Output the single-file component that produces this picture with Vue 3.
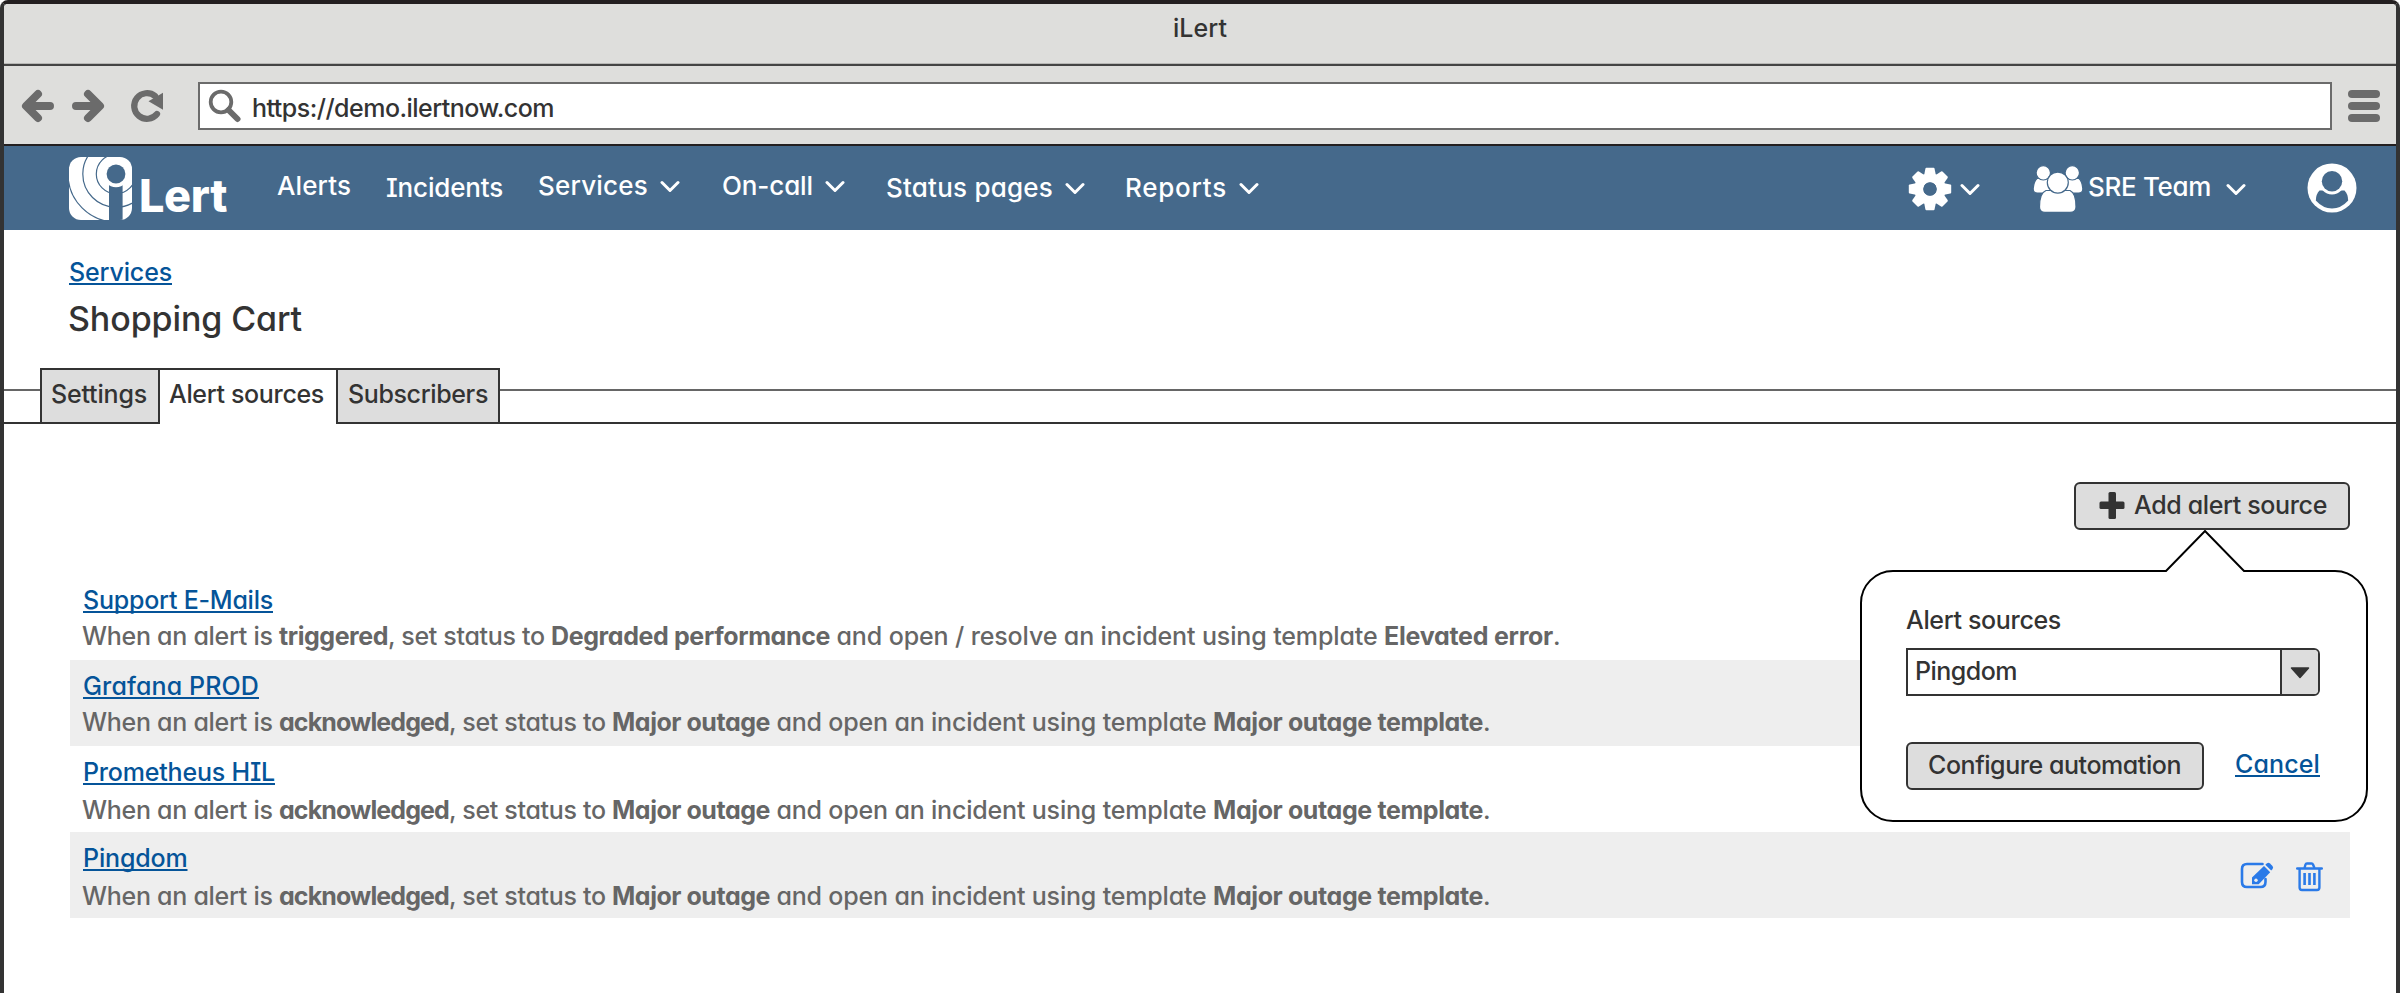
<script setup>
// Spreads a text run over a fixed width by adjusting its letter spacing.
const vFit = {
  mounted(el, { value }) {
    const width = el.getBoundingClientRect().width
    el.style.letterSpacing = `${(value - width) / el.textContent.length}px`
  },
}

const menu = [
  { label: 'Alerts', width: 74 },
  { label: 'Incidents', width: 117, low: true },
  { label: 'Services', width: 110, more: true },
  { label: 'On-call', width: 91, more: true },
  { label: 'Status pages', width: 167, more: true, low: true },
  { label: 'Reports', width: 102, more: true, low: true },
]

const tabs = [
  { label: 'Settings', width: 96, cls: 'settings' },
  { label: 'Alert sources', width: 155, cls: 'active' },
  { label: 'Subscribers', width: 140, cls: 'subscribers' },
]

const outage = [
  { t: 'When an alert is ', w: 197 },
  { t: 'acknowledged', w: 170, b: true },
  { t: ', set status to ', w: 163 },
  { t: 'Major outage', w: 158, b: true },
  { t: ' and open an incident using template ', w: 443 },
  { t: 'Major outage template', w: 270, b: true },
  { t: '.', w: 6 },
]

const rows = [
  {
    name: 'Support E-Mails',
    width: 190,
    cls: 'r1',
    runs: [
      { t: 'When an alert is ', w: 197 },
      { t: 'triggered', w: 109, b: true },
      { t: ', set status to ', w: 163 },
      { t: 'Degraded performance', w: 279, b: true },
      { t: ' and open / resolve an incident using template ', w: 554 },
      { t: 'Elevated error', w: 169, b: true },
      { t: '.', w: 6 },
    ],
  },
  { name: 'Grafana PROD', width: 176, cls: 'r2', runs: outage },
  { name: 'Prometheus HIL', width: 192, cls: 'r3', runs: outage },
  { name: 'Pingdom', width: 104.5, cls: 'r4', runs: outage, actions: true },
]

const teeth = [0, 45, 90, 135, 180, 225, 270, 315]
</script>

<template>
  <div class="window">
    <header class="titlebar"><span v-fit="54">iLert</span></header>
    <div class="toolbar">
      <svg class="nav-icons" width="150" height="40" viewBox="17 86 150 40">
        <g fill="none" stroke="#6b6b6b" stroke-width="8" stroke-linecap="round" stroke-linejoin="round">
          <path d="M50 106H27M38 94L26 106L38 118" />
          <path d="M76 106H99M88 94L100 106L88 118" />
          <path d="M157 114A12.800 12.800 0 1 1 155 96" stroke-width="6.200" />
        </g>
        <path d="M163 92.700V109.800L148.500 101.300Z" fill="#6b6b6b" />
      </svg>
      <div class="address">
        <svg width="34" height="34" viewBox="208 89 34 34" fill="none" stroke="#6b6b6b">
          <circle cx="221" cy="102" r="10.300" stroke-width="3.800" />
          <path d="M228.500 110L237.500 119" stroke-width="6" stroke-linecap="round" />
        </svg>
        <span v-fit="302">https://demo.ilertnow.com</span>
      </div>
      <div class="burger"><i></i><i></i><i></i></div>
    </div>

    <nav class="navbar">
      <div class="logo">
        <svg width="63" height="63" viewBox="0 0 63 63">
          <defs><clipPath id="tile"><rect width="63" height="63" rx="12" /></clipPath></defs>
          <g clip-path="url(#tile)">
            <rect width="63" height="63" fill="#fff" />
            <g fill="none" stroke="#45698b" stroke-width="1.200">
              <circle cx="47" cy="17" r="19.700" />
              <circle cx="47" cy="17" r="33.200" />
              <circle cx="47" cy="17" r="48" />
            </g>
            <rect x="40" y="27" width="13.600" height="36" fill="#45698b" />
            <circle cx="47" cy="17" r="13.200" fill="#fff" />
            <circle cx="47" cy="17" r="9.400" fill="#45698b" />
          </g>
        </svg>
        <b v-fit="88">Lert</b>
      </div>
      <div class="menu">
        <a v-for="m in menu" :key="m.label" :class="{ low: m.low }">
          <span v-fit="m.width">{{ m.label }}</span>
          <svg v-if="m.more" class="chev" width="20" height="13" viewBox="0 0 20 13"><path d="M2 2.500L10 10.500L18 2.500" /></svg>
        </a>
      </div>
      <div class="gear">
        <svg width="44" height="44" viewBox="-22 -22 44 44">
          <circle r="11.200" fill="none" stroke="#fff" stroke-width="9" />
          <path v-for="a in teeth" :key="a" d="M-6 -13L-4.600 -20.300Q-4.400 -21.200 -3.600 -21.200H3.600Q4.400 -21.200 4.600 -20.300L6 -13Z" fill="#fff" :transform="`rotate(${a})`" />
          <circle r="6.600" fill="#45698b" />
        </svg>
        <svg class="chev" width="20" height="13" viewBox="0 0 20 13"><path d="M2 2.500L10 10.500L18 2.500" /></svg>
      </div>
      <div class="team">
        <svg width="50" height="48" viewBox="2033 165 50 48" fill="#fff" stroke="#45698b" stroke-width="1.200">
          <path d="M2037 178.500H2052V193H2037.500Q2033 193 2033.200 188.500Q2034 181 2037 178.500Z" />
          <path d="M2079 178.500H2063V193H2078.500Q2083 193 2082.800 188.500Q2082 181 2079 178.500Z" />
          <circle cx="2043.300" cy="172.800" r="7.200" />
          <circle cx="2072.300" cy="172.800" r="7.200" />
          <path d="M2046 190.500H2070Q2076 193 2076 207Q2076 212.300 2070 212.300H2045Q2039.500 212.300 2039.500 207Q2039.500 193 2046 190.500Z" />
          <circle cx="2057.800" cy="182.600" r="10.500" />
        </svg>
        <span v-fit="123">SRE Team</span>
        <svg class="chev" width="20" height="13" viewBox="0 0 20 13"><path d="M2 2.500L10 10.500L18 2.500" /></svg>
      </div>
      <svg class="avatar" width="50" height="50" viewBox="-25 -25 50 50">
        <circle r="24.500" fill="#fff" />
        <path d="M-12.500 2.500H12.500Q16 6 16.200 12.500Q9 20.500 0 20.500Q-9 20.500 -16.200 12.500Q-16 6 -12.500 2.500Z" fill="#45698b" />
        <ellipse cy="-6.800" rx="13" ry="13.300" fill="#fff" />
        <circle cy="-6.800" r="10.200" fill="#45698b" />
      </svg>
    </nav>

    <main class="page">
      <a class="link crumb" v-fit="103">Services</a>
      <h1><span v-fit="234">Shopping Cart</span></h1>
      <div class="tabs">
        <div v-for="t in tabs" :key="t.label" class="tab" :class="t.cls"><span v-fit="t.width">{{ t.label }}</span></div>
      </div>

      <section class="content">
        <button class="btn add">
          <svg width="26" height="28" viewBox="0 0 26 28" fill="#333">
            <rect x="9.500" y="1" width="7.500" height="27" rx="1.500" />
            <rect x="0.500" y="10.500" width="25" height="7.500" rx="1.500" />
          </svg>
          <span v-fit="193">Add alert source</span>
        </button>

        <ul class="list">
          <li v-for="r in rows" :key="r.name" :class="r.cls">
            <div>
              <a class="link" v-fit="r.width">{{ r.name }}</a>
              <p><span v-for="(s, i) in r.runs" :key="i" :class="{ bold: s.b }" v-fit="s.w">{{ s.t }}</span></p>
            </div>
            <div v-if="r.actions" class="actions">
              <svg width="34" height="28" viewBox="0 0 34 28">
                <path d="M22.500 2H7Q2 2 2 7V20Q2 25 7 25H20.500Q25.500 25 25.500 20V17" fill="none" stroke="#2a7ae8" stroke-width="2.600" stroke-linecap="round" />
                <path d="M12 22.300V15.500L24 4L30.200 10.200L18.700 22.300Z" fill="#2a7ae8" />
                <path d="M25.300 2.800L27 1.200Q28.600 0 30 1.400L32.500 4Q33.700 5.400 32.600 6.900L31.200 8.600Z" fill="#2a7ae8" />
                <circle cx="16" cy="18.200" r="1.700" fill="#eee" />
              </svg>
              <svg width="27" height="30" viewBox="0 0 27 30" fill="none" stroke="#2a7ae8" stroke-width="2.400">
                <path d="M1.200 6.500H25.800" stroke-linecap="round" />
                <path d="M8.500 6L9.500 2.500Q9.800 1.500 11 1.500H15.500Q16.700 1.500 17 2.500L18.500 6" />
                <path d="M3.600 6.500V25.500Q3.600 28 6 28H21Q23.400 28 23.400 25.500V6.500" />
                <path d="M8.600 11V23M13.500 11V23M18.400 11V23" stroke-width="2.600" />
              </svg>
            </div>
          </li>
        </ul>

        <div class="callout">
          <svg class="bubble" width="508" height="292" viewBox="0 0 508 292">
            <path d="M33 41H306L345 1L384 41H475A32 32 0 0 1 507 73V259A32 32 0 0 1 475 291H33A32 32 0 0 1 1 259V73A32 32 0 0 1 33 41Z" fill="#fff" stroke="#000" stroke-width="2" />
          </svg>
          <div class="form">
            <label><span v-fit="155">Alert sources</span></label>
            <div class="combo">
              <div class="value"><span v-fit="102">Pingdom</span></div>
              <div class="drop"><svg width="20" height="12" viewBox="0 0 20 12"><path d="M1.500 1H18.500L10 10.500Z" fill="#333" stroke="#333" stroke-width="1.500" stroke-linejoin="round" /></svg></div>
            </div>
            <div class="buttons">
              <button class="btn configure"><span v-fit="253">Configure automation</span></button>
              <a class="link" v-fit="85">Cancel</a>
            </div>
          </div>
        </div>
      </section>
    </main>
  </div>
</template>

<style>
body {
  background: #fff;
}
</style>

<style scoped>
* {
  box-sizing: border-box;
}
.window {
  width: 2400px;
  height: 993px;
  overflow: hidden;
  border: 4px solid #333;
  border-top-color: #231f20;
  border-bottom: 0;
  border-radius: 8px 8px 0 0;
  background: #fff;
  color: #333;
  font: 500 25px/30px Inter, 'Liberation Sans', sans-serif;
  font-feature-settings: 'cv11', 'cv08', 'cv10';
  display: flex;
  flex-direction: column;
}
span, a, b {
  display: inline-block;
  white-space: pre;
}
svg {
  display: block;
  flex: none;
}
.titlebar {
  height: 62px;
  padding: 9px 0 0;
  text-align: center;
  background: #dededc;
  border-bottom: 2px solid #444;
  box-shadow: inset 0 -1px #b8b8b6;
}
.toolbar {
  height: 80px;
  padding: 16px 16px 0 13px;
  background: #dededc;
  border-bottom: 2px solid #231f20;
  display: flex;
}
.nav-icons {
  margin-top: 4px;
}
.address {
  margin-left: 31px;
  width: 2134px;
  height: 48px;
  border: 2px solid #6b6b6b;
  background: #fff;
  display: flex;
  padding: 5px 0 0 8px;
}
.address span {
  margin: 4px 0 0 10px;
}
.burger {
  margin: 8px 0 0 16px;
  width: 32px;
  display: flex;
  flex-direction: column;
  gap: 4px;
}
.burger i {
  height: 8px;
  border-radius: 4px;
  background: #6b6b6b;
}
.navbar {
  height: 84px;
  background: #45698b;
  color: #fff;
  display: flex;
  font-size: 26px;
}
.logo {
  display: flex;
  width: 273px;
  padding: 11px 0 0 65px;
}
.logo b {
  font-size: 45px;
  line-height: 50px;
  margin: 14px 0 0 7px;
  font-weight: 800;
}
.menu {
  display: grid;
  grid-template-columns: 109px 152px 184px 164px 239px 160px;
  padding-top: 25px;
  width: 1631px;
}
.menu a {
  display: flex;
}
.menu .low {
  padding-top: 2px;
}
.chev {
  fill: none;
  stroke: #fff;
  stroke-width: 3;
  stroke-linecap: round;
  stroke-linejoin: round;
}
.menu .chev {
  margin: 9px 0 0 12px;
}
.gear {
  display: flex;
  width: 125px;
  padding-top: 21px;
}
.gear .chev {
  margin: 16px 0 0 8px;
}
.team {
  display: flex;
  width: 274px;
  padding-top: 19px;
}
.team span {
  margin: 7px 0 0 5px;
}
.team .chev {
  margin: 18px 0 0 15px;
}
.avatar {
  margin-top: 17px;
}
.page {
  padding-top: 27px;
}
.link {
  color: #055499;
  text-decoration: underline;
  text-decoration-thickness: 2px;
  text-underline-offset: 2px;
  text-decoration-skip-ink: none;
}
.crumb {
  display: block;
  width: max-content;
  margin-left: 65px;
}
h1 {
  margin: 12px 0 0 64px;
  font: inherit;
  font-size: 34px;
  line-height: 40px;
  height: 69px;
}
.tabs {
  display: flex;
  height: 56px;
  padding-left: 36px;
  background: linear-gradient(#666, #666) 0 21px / 100% 2px no-repeat,
    linear-gradient(#333, #333) 0 100% / 100% 2px no-repeat;
}
.tab {
  border: 2px solid #333;
  background: #ddd;
  padding: 9px 0 0 9px;
}
.settings {
  width: 120px;
}
.active {
  width: 176px;
  background: #fff;
  border-width: 2px 0 0;
}
.subscribers {
  width: 164px;
  padding-left: 10px;
}
.content {
  position: relative;
  padding: 58px 46px 0 66px;
  display: flex;
  flex-direction: column;
}
.btn {
  height: 48px;
  border: 2px solid #333;
  border-radius: 6px;
  background: #ddd;
  color: inherit;
  font: inherit;
  font-feature-settings: inherit;
  padding: 6px 0 0;
  display: flex;
}
.add {
  width: 276px;
  align-self: flex-end;
  padding-left: 23px;
}
.add svg {
  margin: 1px 9px 0 0;
}
.list {
  list-style: none;
  margin: 44px 0 0;
  padding: 0;
}
.list li {
  height: 86px;
  padding: 11px 0 0 13px;
  display: flex;
}
.list p {
  margin: 6px 0 0 -1px;
  color: #666;
  white-space: pre;
}
.list .link {
  display: block;
  width: max-content;
}
.bold {
  font-weight: 700;
}
.list .r2,
.list .r4 {
  background: #eee;
}
.list .r3 p {
  margin-top: 8px;
}
.list .r4 p {
  margin-top: 8px;
}
.actions {
  display: flex;
  gap: 22px;
  margin: 19px 27px 0 auto;
}
.callout {
  position: absolute;
  left: 1856px;
  top: 106px;
  width: 508px;
  height: 292px;
}
.bubble {
  position: absolute;
  inset: 0;
}
.form {
  position: relative;
  padding: 74px 0 0 46px;
}
label {
  display: block;
  height: 44px;
}
label span {
  margin-top: 1px;
}
.combo {
  display: flex;
  width: 414px;
  height: 48px;
  border: 2px solid #333;
  border-radius: 0 6px 6px 0;
  background: #fff;
}
.value {
  flex: 1;
  padding: 6px 0 0 7px;
}
.drop {
  width: 38px;
  background: #ddd;
  border-left: 2px solid #333;
  border-radius: 0 4px 4px 0;
  padding: 17px 0 0 8px;
}
.buttons {
  margin-top: 46px;
  display: flex;
}
.configure {
  width: 298px;
  padding-left: 20px;
}
.buttons .link {
  margin: 7px 0 0 31px;
}
</style>
